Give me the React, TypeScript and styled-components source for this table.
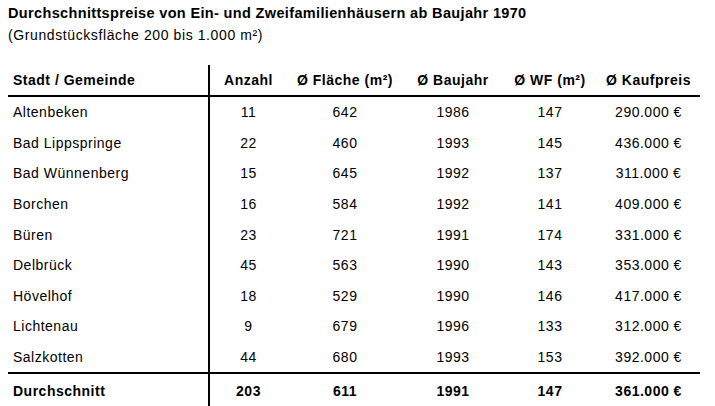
import React from "react";
import styled, { createGlobalStyle } from "styled-components";

const Global = createGlobalStyle`
  html, body { margin: 0; padding: 0; background: #ffffff; }
  body { font-family: "Liberation Sans", Arial, sans-serif; color: #000; }
`;

const Page = styled.div`
  width: 715px;
  height: 406px;
  overflow: hidden;
  padding: 5px 0 0 8px;
  box-sizing: border-box;
`;

const Title = styled.h1`
  margin: 0;
  font-size: 14.5px;
  font-weight: bold;
  letter-spacing: 0.35px;
  line-height: 17px;
`;

const Subtitle = styled.p`
  margin: 5px 0 0;
  font-size: 14px;
  letter-spacing: 0.6px;
  line-height: 17px;
`;

const Table = styled.table`
  margin-top: 21px;
  width: 692px;
  border-collapse: collapse;
  font-size: 14px;
  letter-spacing: 0.5px;
  table-layout: fixed;
`;

const Col = styled.col<{ $w: number }>`
  width: ${(p) => p.$w}px;
`;

const HeadCell = styled.th<{ $left?: boolean }>`
  height: 30px;
  padding: 0 0 0 ${(p) => (p.$left ? "5px" : "0")};
  font-weight: bold;
  text-align: ${(p) => (p.$left ? "left" : "center")};
  border-bottom: 2px solid #000;
  white-space: nowrap;
  &:first-child { border-right: 2px solid #000; }
`;

const Cell = styled.td<{ $left?: boolean; $bold?: boolean }>`
  height: 30.6px;
  padding: 0 0 0 ${(p) => (p.$left ? "5px" : "0")};
  text-align: ${(p) => (p.$left ? "left" : "center")};
  font-weight: ${(p) => (p.$bold ? "bold" : "normal")};
  white-space: nowrap;
  &:first-child { border-right: 2px solid #000; }
`;

const Row = styled.tr``;

const TotalRow = styled.tr`
  & > td { border-top: 2px solid #000; height: 33px; padding-bottom: 2px; }
`;

const rows: [string, string, string, string, string, string][] = [
  ["Altenbeken", "11", "642", "1986", "147", "290.000 €"],
  ["Bad Lippspringe", "22", "460", "1993", "145", "436.000 €"],
  ["Bad Wünnenberg", "15", "645", "1992", "137", "311.000 €"],
  ["Borchen", "16", "584", "1992", "141", "409.000 €"],
  ["Büren", "23", "721", "1991", "174", "331.000 €"],
  ["Delbrück", "45", "563", "1990", "143", "353.000 €"],
  ["Hövelhof", "18", "529", "1990", "146", "417.000 €"],
  ["Lichtenau", "9", "679", "1996", "133", "312.000 €"],
  ["Salzkotten", "44", "680", "1993", "153", "392.000 €"],
];

const widths = [201, 78, 116, 100, 94, 103];
const headers = ["Stadt / Gemeinde", "Anzahl", "Ø Fläche (m²)", "Ø Baujahr", "Ø WF (m²)", "Ø Kaufpreis"];
const total = ["Durchschnitt", "203", "611", "1991", "147", "361.000 €"];

export default function App() {
  return (
    <>
      <Global />
      <Page>
        <Title>Durchschnittspreise von Ein- und Zweifamilienhäusern ab Baujahr 1970</Title>
        <Subtitle>(Grundstücksfläche 200 bis 1.000 m²)</Subtitle>
        <Table>
          <colgroup>
            {widths.map((w, i) => (
              <Col key={i} $w={w} />
            ))}
          </colgroup>
          <thead>
            <tr>
              {headers.map((h, i) => (
                <HeadCell key={h} $left={i === 0}>
                  {h}
                </HeadCell>
              ))}
            </tr>
          </thead>
          <tbody>
            {rows.map((r) => (
              <Row key={r[0]}>
                {r.map((v, i) => (
                  <Cell key={i} $left={i === 0}>
                    {v}
                  </Cell>
                ))}
              </Row>
            ))}
            <TotalRow>
              {total.map((v, i) => (
                <Cell key={i} $left={i === 0} $bold>
                  {v}
                </Cell>
              ))}
            </TotalRow>
          </tbody>
        </Table>
      </Page>
    </>
  );
}
